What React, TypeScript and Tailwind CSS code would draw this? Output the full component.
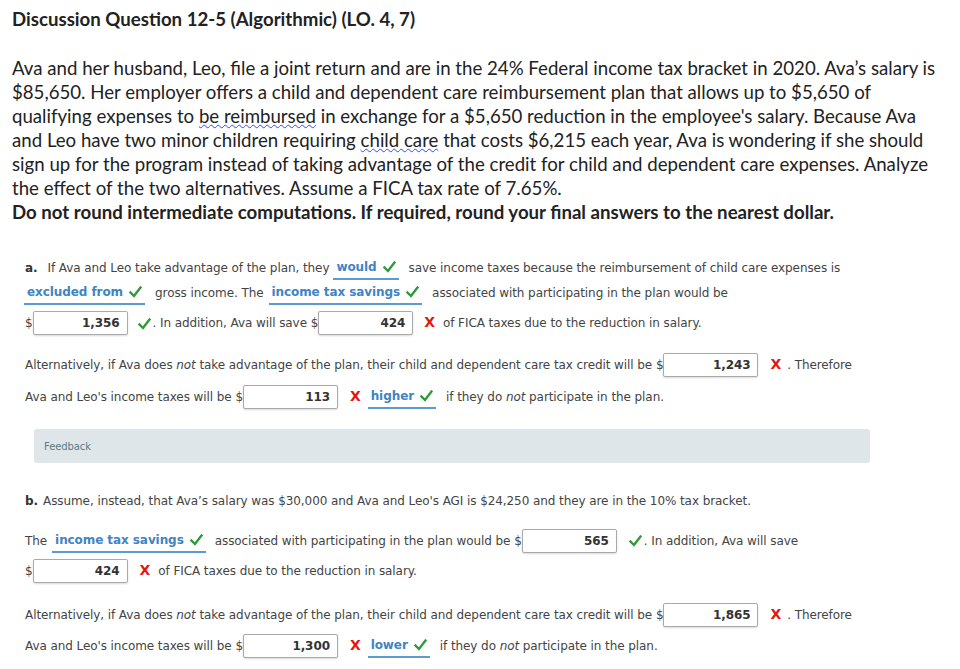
import React from "react";

const Check = () => (
  <svg width="13" height="12" viewBox="0 0 13 12" className="inline-block shrink-0">
    <path d="M1.5 6.5 L5 10 L11.5 1.5" fill="none" stroke="#2f9a3a" strokeWidth="2.4" strokeLinecap="square" />
  </svg>
);

const Cross = () => <span className="font-bold text-[#e8140f] text-[14px] leading-none">X</span>;

const Answer = ({ text, className = "" }: { text: string; className?: string }) => (
  <span className={`inline-flex items-center gap-[6px] border-b-2 border-[#5b9bd5] px-[3px] pb-[2px] pt-[3px] font-bold text-[#3f84c4] ${className}`}>
    {text}
    <Check />
  </span>
);

const Box = ({ value }: { value: string }) => (
  <span className="inline-flex h-[24px] w-[95px] shrink-0 items-center justify-end rounded-[2px] border border-[#a9a9a9] bg-white pr-[7px] font-bold text-[#333] shadow-[0_1px_2px_rgba(0,0,0,0.15)]">
    {value}
  </span>
);

const Row = ({ className = "", children }: { className?: string; children: React.ReactNode }) => (
  <div className={`flex h-[25px] items-center whitespace-nowrap ${className}`}>{children}</div>
);

export default function App() {
  const top = "font-['Lato'] text-[18.65px] leading-[24px] text-[#222]";
  const wavy = "underline decoration-wavy decoration-[#2b4bff] decoration-1 underline-offset-[1px]";
  return (
    <div className="h-[669px] w-[960px] overflow-hidden bg-white">
      <div className="pl-[12px]">
        <div className={`${top} pt-[7px] font-bold`}>Discussion Question 12-5 (Algorithmic) (LO. 4, 7)</div>
        <div className={`${top} mt-[25px] whitespace-nowrap`}>
          <div>Ava and her husband, Leo, file a joint return and are in the 24% Federal income tax bracket in 2020. Ava’s salary is</div>
          <div>$85,650. Her employer offers a child and dependent care reimbursement plan that allows up to $5,650 of</div>
          <div>
            qualifying expenses to <span className={wavy}>be reimbursed</span> in exchange for a $5,650 reduction in the employee's salary. Because Ava
          </div>
          <div>
            and Leo have two minor children requiring <span className={wavy}>child care</span> that costs $6,215 each year, Ava is wondering if she should
          </div>
          <div>sign up for the program instead of taking advantage of the credit for child and dependent care expenses. Analyze</div>
          <div>the effect of the two alternatives. Assume a FICA tax rate of 7.65%.</div>
          <div className="font-bold">Do not round intermediate computations. If required, round your final answers to the nearest dollar.</div>
        </div>
      </div>

      <div className="mt-[31px] pl-[25px] font-['DejaVu_Sans'] text-[12px] tracking-[-0.08px] text-[#444]">
        {/* part a */}
        <Row>
          <span className="font-bold text-[#333]">a.</span>
          <span className="ml-[10px]">If Ava and Leo take advantage of the plan, they</span>
          <Answer text="would" className="ml-[4px]" />
          <span className="ml-[10px]">save income taxes because the reimbursement of child care expenses is</span>
        </Row>
        <Row>
          <Answer text="excluded from" className="-ml-[1px]" />
          <span className="ml-[10px]">gross income. The</span>
          <Answer text="income tax savings" className="ml-[5px]" />
          <span className="ml-[10px]">associated with participating in the plan would be</span>
        </Row>
        <Row className="mt-[5px] h-[26px]">
          <span>$</span>
          <Box value="1,356" />
          <span className="ml-[10px]"><Check /></span>
          <span className="ml-[2px]">. In addition, Ava will save $</span>
          <Box value="424" />
          <span className="ml-[11px]"><Cross /></span>
          <span className="ml-[8px]">of FICA taxes due to the reduction in salary.</span>
        </Row>

        <Row className="mt-[16px]">
          <span>
            Alternatively, if Ava does <i>not</i> take advantage of the plan, their child and dependent care tax credit will be $
          </span>
          <Box value="1,243" />
          <span className="ml-[12px]"><Cross /></span>
          <span className="ml-[6px]">. Therefore</span>
        </Row>
        <Row className="mt-[7px]">
          <span>Ava and Leo's income taxes will be $</span>
          <Box value="113" />
          <span className="ml-[12px]"><Cross /></span>
          <Answer text="higher" className="ml-[7px]" />
          <span className="ml-[10px]">
            if they do <i>not</i> participate in the plan.
          </span>
        </Row>

        <div className="ml-[9px] mt-[20px] flex h-[34px] w-[836px] items-center rounded-[3px] bg-[#dfe6ea] pl-[10px] text-[10px] text-[#5c7b80]">
          Feedback
        </div>

        {/* part b */}
        <Row className="mt-[25px]">
          <span className="font-bold text-[#333]">b.</span>
          <span className="ml-[5px]">Assume, instead, that Ava’s salary was $30,000 and Ava and Leo's AGI is $24,250 and they are in the 10% tax bracket.</span>
        </Row>
        <Row className="mt-[15px]">
          <span>The</span>
          <Answer text="income tax savings" className="ml-[5px]" />
          <span className="ml-[9px]">associated with participating in the plan would be $</span>
          <Box value="565" />
          <span className="ml-[12px]"><Check /></span>
          <span className="ml-[2px]">. In addition, Ava will save</span>
        </Row>
        <Row className="mt-[5px]">
          <span>$</span>
          <Box value="424" />
          <span className="ml-[12px]"><Cross /></span>
          <span className="ml-[8px]">of FICA taxes due to the reduction in salary.</span>
        </Row>

        <Row className="mt-[19px]">
          <span>
            Alternatively, if Ava does <i>not</i> take advantage of the plan, their child and dependent care tax credit will be $
          </span>
          <Box value="1,865" />
          <span className="ml-[12px]"><Cross /></span>
          <span className="ml-[6px]">. Therefore</span>
        </Row>
        <Row className="mt-[6px]">
          <span>Ava and Leo's income taxes will be $</span>
          <Box value="1,300" />
          <span className="ml-[12px]"><Cross /></span>
          <Answer text="lower" className="ml-[7px]" />
          <span className="ml-[10px]">
            if they do <i>not</i> participate in the plan.
          </span>
        </Row>
      </div>
    </div>
  );
}
